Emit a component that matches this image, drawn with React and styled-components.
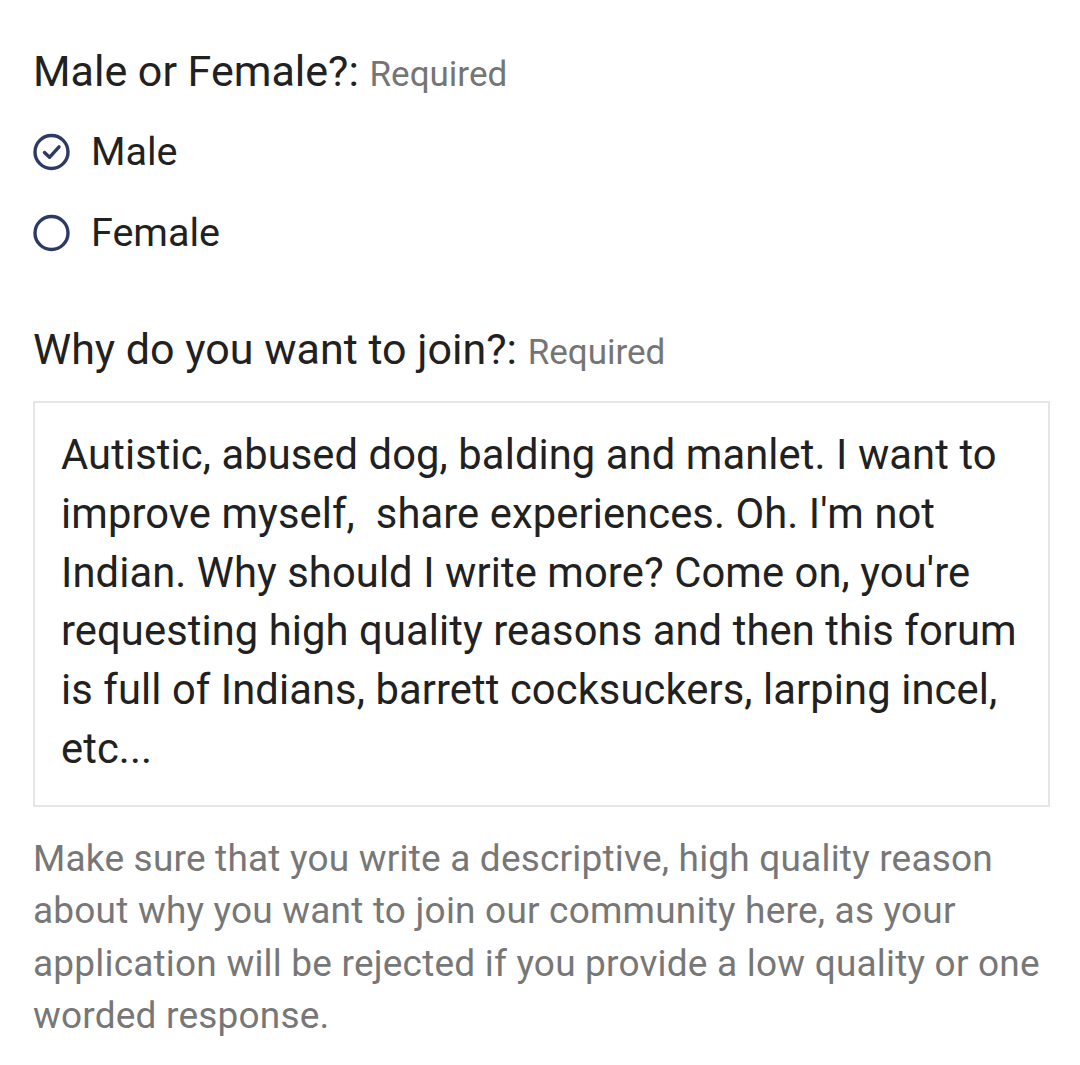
import React from 'react'
import styled, { createGlobalStyle } from 'styled-components'

const Global = createGlobalStyle`
  html, body {
    margin: 0;
    padding: 0;
    background: #ffffff;
  }
  body {
    font-family: Roboto, "Noto Sans", sans-serif;
    color: #212121;
  }
`

const Page = styled.div`
  width: 1080px;
  padding: 45px 30px 0 33px;
  box-sizing: border-box;
`

const Field = styled.div`
  margin-bottom: ${p => p.gap || 0}px;
`

const Label = styled.div`
  font-size: 43px;
  line-height: 52px;
  color: #212121;
  margin-bottom: ${p => p.below || 0}px;
`

const Req = styled.span`
  font-size: 35px;
  color: #757575;
`

const RadioList = styled.div`
  display: flex;
  flex-direction: column;
  gap: 29px;
  margin-top: 25px;
`

const RadioRow = styled.label`
  display: flex;
  align-items: center;
  gap: 20px;
  font-size: 39.5px;
  line-height: 52px;
  color: #212121;
`

const Ring = styled.svg`
  width: 38px;
  height: 38px;
  flex: none;
`

const Box = styled.div`
  border: 2px solid #e6e6e6;
  padding: 23px 30px 26px 26px;
  min-height: 406px;
  box-sizing: border-box;
  font-size: 41.7px;
  line-height: 58.8px;
  letter-spacing: 0.1px;
  color: #212121;
  white-space: pre-wrap;
`

const Help = styled.p`
  margin: 26px 0 0;
  font-size: 37px;
  line-height: 52.4px;
  letter-spacing: 0.2px;
  color: #777777;
`

const Radio = ({ checked, children }) => (
  <RadioRow>
    <Ring viewBox="0 0 38 38">
      <circle cx="18.5" cy="19" r="16.5" fill="none" stroke="#2c3a66" strokeWidth="3.4" />
      {checked && (
        <path d="M11.5 19.5 L16.5 24.3 L26 13.8" fill="none" stroke="#2c3a66" strokeWidth="3.4" strokeLinecap="round" strokeLinejoin="round" />
      )}
    </Ring>
    {children}
  </RadioRow>
)

const text =
  "Autistic, abused dog, balding and manlet. I want to improve myself,  share experiences. Oh. I'm not Indian. Why should I write more? Come on, you're requesting high quality reasons and then this forum is full of Indians, barrett cocksuckers, larping incel, etc..."

export default function App() {
  return (
    <>
      <Global />
      <Page>
        <Field gap={64}>
          <Label>Male or Female?: <Req>Required</Req></Label>
          <RadioList>
            <Radio checked>Male</Radio>
            <Radio>Female</Radio>
          </RadioList>
        </Field>
        <Field>
          <Label below={22}>Why do you want to join?: <Req>Required</Req></Label>
          <Box>{text}</Box>
          <Help>
            Make sure that you write a descriptive, high quality reason about why you want to join our community here, as your application will be rejected if you provide a low quality or one worded response.
          </Help>
        </Field>
      </Page>
    </>
  )
}
